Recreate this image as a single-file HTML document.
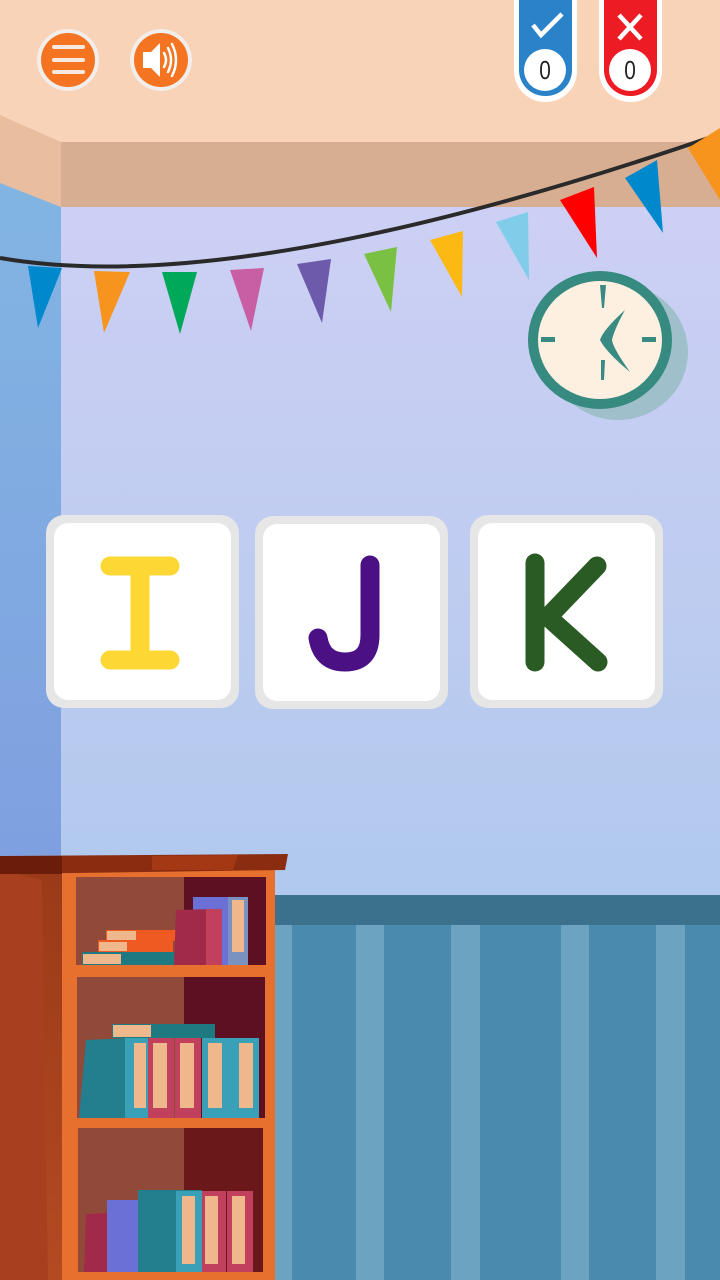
<!DOCTYPE html>
<html><head><meta charset="utf-8"><style>
html,body{margin:0;padding:0;width:720px;height:1280px;overflow:hidden}
svg{display:block}
</style></head><body>
<svg width="720" height="1280" viewBox="0 0 720 1280" xmlns="http://www.w3.org/2000/svg">
<defs>
<linearGradient id="wall" x1="0" y1="0" x2="0" y2="1">
<stop offset="0" stop-color="#d5d2f6"/><stop offset="0.5" stop-color="#bccbf0"/><stop offset="1" stop-color="#9ec6e8"/>
</linearGradient>
<linearGradient id="lwall" x1="0" y1="0" x2="0" y2="1">
<stop offset="0" stop-color="#82b6e2"/><stop offset="1" stop-color="#7f9fe0"/>
</linearGradient>
<linearGradient id="side" x1="0" y1="0" x2="0" y2="1">
<stop offset="0" stop-color="#9a3a18"/><stop offset="1" stop-color="#b44a22"/>
</linearGradient>
</defs>
<rect x="0" y="0" width="720" height="1280" fill="url(#wall)"/>
<rect x="0" y="150" width="61" height="730" fill="url(#lwall)"/>
<rect x="0" y="0" width="720" height="142" fill="#f8d3b8"/>
<rect x="61" y="142" width="659" height="65" fill="#d7ae91"/>
<polygon points="0,115 61,142 61,207 0,183" fill="#e9bda0"/>
<rect x="273" y="895" width="447" height="385" fill="#4a8aae"/>
<rect x="273" y="895" width="447" height="30" fill="#3c718d"/>
<g fill="#6ca3c0">
<rect x="275" y="925" width="17" height="355"/>
<rect x="356" y="925" width="28" height="355"/>
<rect x="451" y="925" width="29" height="355"/>
<rect x="561" y="925" width="28" height="355"/>
<rect x="656" y="925" width="29" height="355"/>
</g>
<ellipse cx="618" cy="352" rx="70" ry="68" fill="#9fbfcb"/>
<ellipse cx="600" cy="340" rx="72" ry="69" fill="#368a80"/>
<ellipse cx="600" cy="340" rx="62" ry="59" fill="#fdf0e0"/>
<g fill="#3a8a84">
<polygon points="600,285 606,285 604,308 602,308"/>
<polygon points="601,360 605,360 604,380 601,380"/>
<rect x="541" y="337" width="14" height="5"/>
<rect x="642" y="337" width="14" height="5"/>
<path d="M625,310 Q603,330 600,340 Q606,352 630,372 Q613,348 612,340 Q614,330 625,310Z"/>
</g>
<g>
<path d="M0,258 Q240,300 720,134" stroke="#2a2a2a" stroke-width="4" fill="none"/>
<polygon points="28,266 62,268 38,328" fill="#0088cc"/>
<polygon points="94,271 130,272 104,333" fill="#f7941d"/>
<polygon points="162,272 197,272 180,334" fill="#00a859"/>
<polygon points="230,270 264,268 251,331" fill="#c85fa5"/>
<polygon points="297,264 331,259 322,323" fill="#6e5aaa"/>
<polygon points="364,254 397,247 391,312" fill="#7ac143"/>
<polygon points="430,240 463,231 462,297" fill="#fdb913"/>
<polygon points="496,222 528,212 529,280" fill="#7fcde8"/>
<polygon points="560,200 594,187 597,258" fill="#ff0000"/>
<polygon points="625,178 657,160 663,233" fill="#0088cc"/>
<polygon points="688,148 720,128 720,200" fill="#f7941d"/>
</g>
<circle cx="68" cy="60" r="31" fill="#f1eeec"/>
<circle cx="68" cy="60" r="27" fill="#f47421"/>
<g stroke="#f6e9e0" stroke-width="4" stroke-linecap="round"><line x1="54" y1="47" x2="83" y2="47"/><line x1="54" y1="60" x2="83" y2="60"/><line x1="54" y1="72" x2="83" y2="72"/></g>
<circle cx="161" cy="60" r="31" fill="#f1eeec"/>
<circle cx="161" cy="60" r="27" fill="#f47421"/>
<polygon points="143,52 151,52 160,43 160,77 151,68 143,68" fill="#fff"/>
<g stroke="#fff" stroke-width="2.5" fill="none" stroke-linecap="round">
<path d="M164,53 Q168,60 164,67"/><path d="M168,48 Q174,60 168,72"/><path d="M172,44 Q180,60 172,76"/></g>
<rect x="514" y="-40" width="63" height="142" rx="31" fill="#fff"/>
<rect x="519" y="-40" width="53" height="136" rx="26" fill="#2a82c8"/>
<circle cx="545" cy="70" r="21" fill="#fff"/>
<path d="M533,25 L541,35 L562,14" stroke="#fff" stroke-width="4.5" fill="none"/>
<text x="545" y="79" font-family="Liberation Sans,sans-serif" font-size="26" text-anchor="middle" fill="#222" transform="translate(545 0) scale(0.8 1) translate(-545 0)">0</text>
<rect x="599" y="-40" width="63" height="142" rx="31" fill="#fff"/>
<rect x="604" y="-40" width="53" height="136" rx="26" fill="#ed1c24"/>
<circle cx="630" cy="70" r="21" fill="#fff"/>
<path d="M619,15 L641,39 M641,15 L619,39" stroke="#fff" stroke-width="4.5"/>
<text x="630" y="79" font-family="Liberation Sans,sans-serif" font-size="26" text-anchor="middle" fill="#222" transform="translate(630 0) scale(0.8 1) translate(-630 0)">0</text>
<g>
<rect x="46" y="515" width="193" height="193" rx="18" fill="#e6e6e6"/>
<rect x="54" y="523" width="177" height="177" rx="14" fill="#fff"/>
<rect x="255" y="516" width="193" height="193" rx="18" fill="#e6e6e6"/>
<rect x="263" y="524" width="177" height="177" rx="14" fill="#fff"/>
<rect x="470" y="515" width="193" height="193" rx="18" fill="#e6e6e6"/>
<rect x="478" y="523" width="177" height="177" rx="14" fill="#fff"/>
</g>
<g stroke="#fdd835" stroke-width="19" stroke-linecap="round" fill="none">
<path d="M110,566 L170,566 M140,566 L140,660 M110,660 L170,660"/>
</g>
<path d="M370,565 L370,635 Q370,662 345,662 Q322,662 318,638" stroke="#4b1083" stroke-width="19" stroke-linecap="round" fill="none"/>
<path d="M535,563 L535,662 M597,566 L548,617 L598,662" stroke="#2a5b24" stroke-width="19" stroke-linecap="round" stroke-linejoin="round" fill="none"/>
<rect x="0" y="870" width="64" height="410" fill="url(#side)"/>
<polygon points="0,870 42,880 48,1280 0,1280" fill="#a8401f"/>
<rect x="62" y="868" width="213" height="412" fill="#e8702e"/>
<polygon points="0,856 288,854 285,870 0,874" fill="#8a2c10"/>
<polygon points="0,856 62,856 62,874 0,874" fill="#6a1e0a"/>
<polygon points="152,856 238,855 233,870 152,870" fill="#a43815"/>
<rect x="76" y="877" width="190" height="88" fill="#914a3a"/><rect x="184" y="877" width="82" height="88" fill="#5c1022"/>
<rect x="77" y="977" width="188" height="141" fill="#914a3a"/><rect x="184" y="977" width="81" height="141" fill="#5c1022"/>
<rect x="78" y="1128" width="185" height="144" fill="#914a3a"/><rect x="184" y="1128" width="79" height="144" fill="#6a181a"/>
<rect x="82" y="952" width="103" height="13" fill="#1e7a80"/><rect x="83" y="954" width="38" height="10" fill="#efb88c"/>
<rect x="98" y="940" width="75" height="12" fill="#ef5a22"/><rect x="99" y="942" width="28" height="9" fill="#efb88c"/>
<rect x="106" y="930" width="76" height="11" fill="#ef5a22"/><rect x="107" y="931" width="29" height="9" fill="#efb88c"/>
<rect x="193" y="897" width="55" height="68" fill="#6a70d6"/>
<rect x="228" y="897" width="20" height="68" fill="#7a92c0"/>
<rect x="232" y="900" width="12" height="52" fill="#efb88c"/>
<polygon points="176,910 214,909 216,965 174,965" fill="#a02a48"/>
<rect x="206" y="909" width="16" height="56" fill="#c0405e"/>
<rect x="112" y="1024" width="103" height="14" fill="#1e7a80"/><rect x="113" y="1025" width="38" height="12" fill="#efb88c"/>
<polygon points="86,1040 132,1038 130,1118 79,1118" fill="#237e8e"/>
<rect x="125" y="1038" width="23" height="80" fill="#3aa0b8"/><rect x="134" y="1043" width="12" height="65" fill="#efb88c"/>
<rect x="148" y="1038" width="26" height="80" fill="#c0405e"/><rect x="153" y="1043" width="14" height="65" fill="#efb88c"/>
<rect x="175" y="1038" width="26" height="80" fill="#c0405e"/><rect x="180" y="1043" width="14" height="65" fill="#efb88c"/>
<rect x="202" y="1038" width="26" height="80" fill="#3aa0b8"/><rect x="208" y="1043" width="14" height="65" fill="#efb88c"/>
<rect x="228" y="1038" width="31" height="80" fill="#3aa0b8"/><rect x="239" y="1043" width="14" height="65" fill="#efb88c"/>
<polygon points="86,1214 130,1212 130,1272 84,1272" fill="#a02a48"/>
<rect x="107" y="1200" width="56" height="72" fill="#6a70d6"/><rect x="143" y="1203" width="17" height="66" fill="#efb88c"/>
<rect x="138" y="1190" width="64" height="82" fill="#237e8e"/><rect x="176" y="1191" width="26" height="81" fill="#3aa0b8"/><rect x="182" y="1196" width="13" height="68" fill="#efb88c"/>
<rect x="202" y="1191" width="24" height="81" fill="#c0405e"/><rect x="205" y="1196" width="13" height="68" fill="#efb88c"/>
<rect x="227" y="1191" width="26" height="81" fill="#c0405e"/><rect x="232" y="1196" width="13" height="68" fill="#efb88c"/>
</svg>
</body></html>
